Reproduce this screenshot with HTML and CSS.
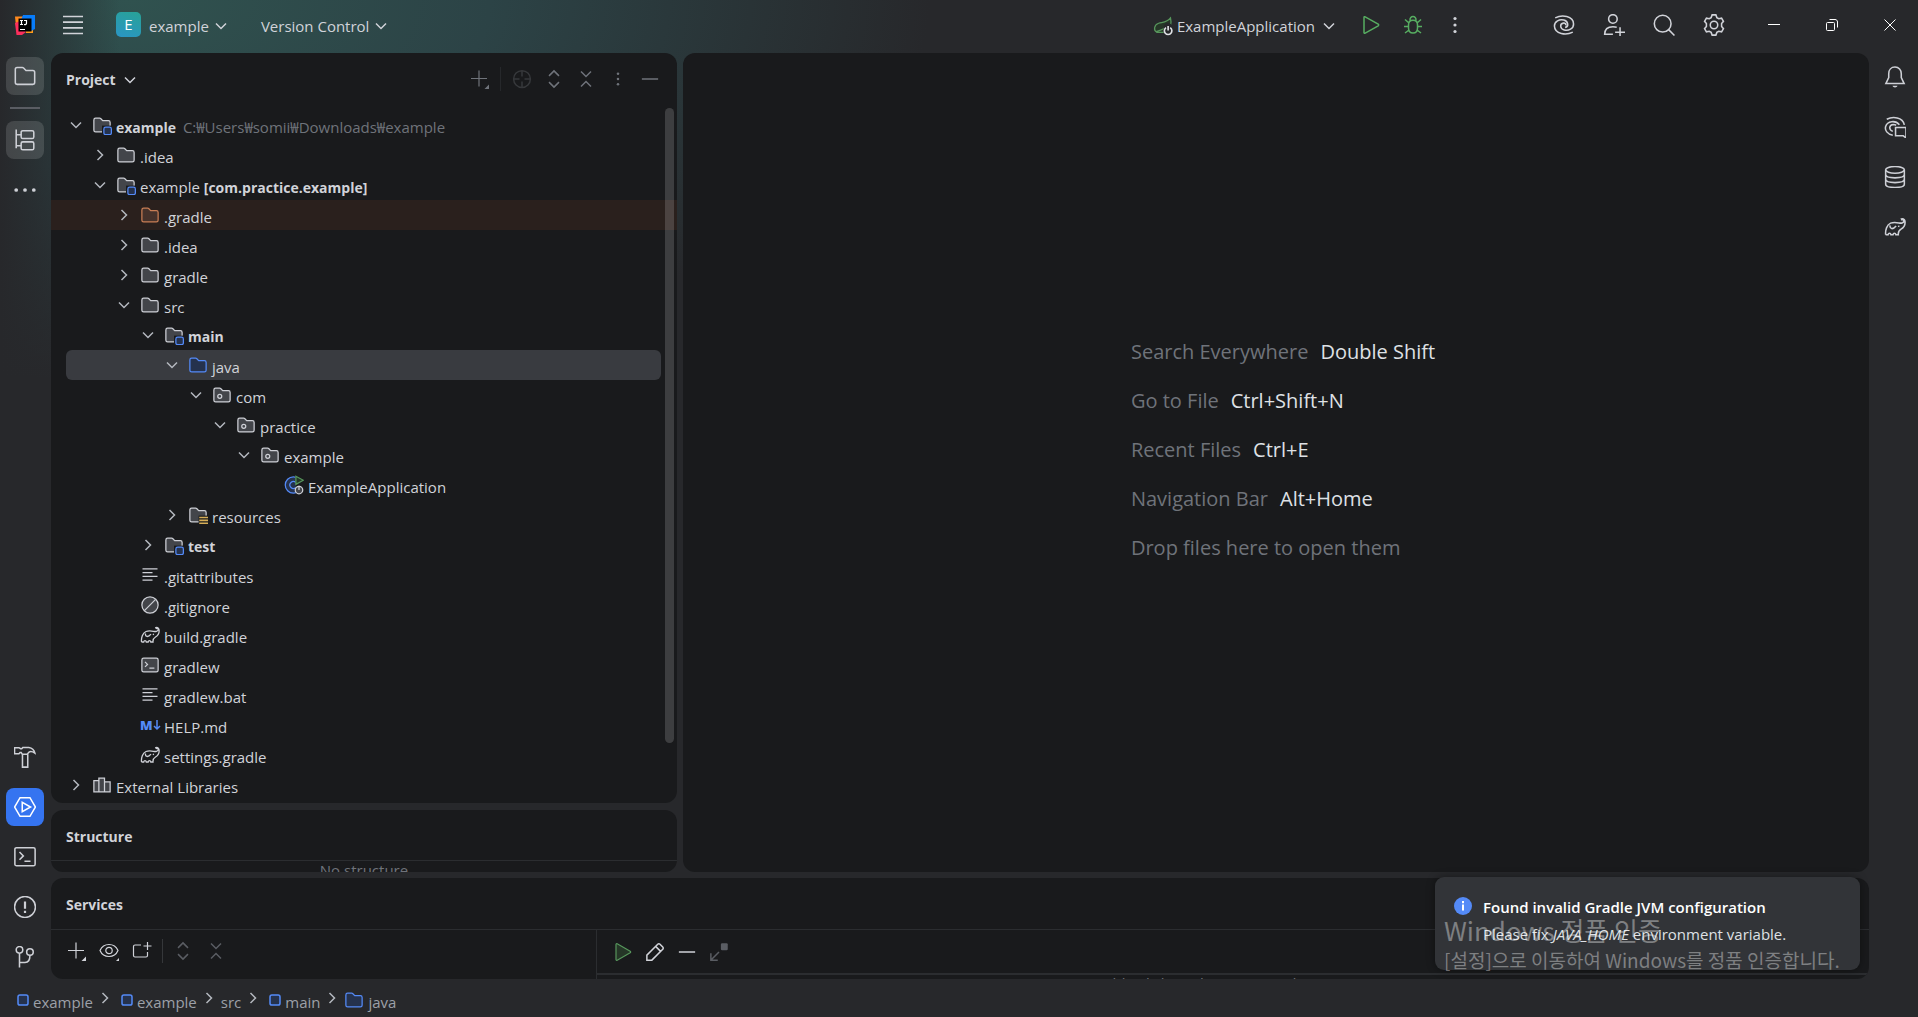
FILE: index.html
```html
<!DOCTYPE html>
<html lang="en">
<head>
  <meta charset="UTF-8" />
  <meta name="viewport" content="width=device-width, initial-scale=1.0"/>
  <title>example</title>
  <link rel="stylesheet" href="styles.css">
</head>
<body>
  <svg class="sprite" aria-hidden="true">
    <symbol id="down" viewBox="0 0 16 16"><path d="M4 6l4 4 4-4"/></symbol>
    <symbol id="right" viewBox="0 0 16 16"><path d="M6 4l4 4-4 4"/></symbol>
    <symbol id="folder" viewBox="0 0 16 16"><path d="M1.5 3.9c0-.8.6-1.4 1.4-1.4h3.2c.3 0 .6.1.8.3l1.7 1.7h4.5c.8 0 1.4.6 1.4 1.4v6.2c0 .8-.6 1.4-1.4 1.4H2.900c-.8 0-1.400-.6-1.400-1.400z"/></symbol>
    <symbol id="module" viewBox="0 0 16 16">
      <path d="M1.500 3.900c0-.8.6-1.400 1.400-1.400h3.200c.3 0 .6.1.8.3l1.700 1.700h4.500c.8 0 1.400.6 1.400 1.400v6.200c0 .8-.6 1.400-1.400 1.400H2.900c-.8 0-1.400-.6-1.400-1.400z"/>
      <rect class="cut" x="8" y="8.500" width="9" height="8"/>
      <rect class="blue" x="9.500" y="9.700" width="6" height="6" rx="1.400"/>
    </symbol>
    <symbol id="resources" viewBox="0 0 16 16">
      <path d="M1.500 3.900c0-.8.6-1.400 1.400-1.400h3.200c.3 0 .6.1.8.3l1.700 1.700h4.500c.8 0 1.400.6 1.400 1.400v6.200c0 .8-.6 1.400-1.400 1.400H2.900c-.8 0-1.400-.6-1.400-1.400z"/>
      <rect class="cut" x="8.500" y="8.500" width="8" height="8"/>
      <path class="gold" d="M9 10h7M9 12.300h7M9 14.600h7"/>
    </symbol>
    <symbol id="package" viewBox="0 0 16 16">
      <path d="M1.500 3.900c0-.8.6-1.400 1.400-1.400h3.200c.3 0 .6.1.8.3l1.700 1.700h4.500c.8 0 1.400.6 1.400 1.400v6.200c0 .8-.6 1.400-1.400 1.400H2.900c-.8 0-1.400-.6-1.400-1.400z"/>
      <circle cx="6.200" cy="9" r="1.600"/>
    </symbol>
    <symbol id="square" viewBox="0 0 16 16"><rect class="blue" x="4" y="4" width="8" height="8" rx="1.500"/></symbol>
    <symbol id="app" viewBox="0 0 16 16">
      <circle class="blue" cx="7.500" cy="8" r="6.500"/>
      <path class="blue-line" d="M9.500 6a2.800 2.800 0 1 0 0 4"/>
      <path class="cut" d="M9 0h7v16h-6.500V8z"/>
      <path class="green" d="M9.500 1v6.500L15.500 4.200z"/>
      <circle class="power" cx="12" cy="12" r="3"/><path d="M12 8.500v3.500"/>
    </symbol>
    <symbol id="spring" viewBox="0 0 16 16">
      <path class="green" d="M14 1.500c1 4 .4 9.500-4.500 11.500H3C.2 11.500.8 7 4.500 5.800c4-1 7-.8 9.500-4.300zM2.500 12.500c4-1 7-2 8.500-5"/>
      <path class="cut-bar" d="M8.500 9a3.500 3.500 0 0 1 7 0v7h-7z"/>
      <path class="bright" d="M10.400 9.300a3 3 0 1 0 3.400 0M12.100 8v3.500"/>
    </symbol>
    <symbol id="text" viewBox="0 0 16 16"><path d="M2 3h12M2 6h8M2 9h12M2 12h8"/></symbol>
    <symbol id="ignore" viewBox="0 0 16 16"><circle class="fill" cx="8" cy="8" r="6.500"/><path d="M3.500 12.500l9-9"/></symbol>
    <symbol id="gradle" viewBox="0 0 20 20">
      <path d="M1.500 17c-.4-4 1-9 4.500-10.500 2.500-1 5.500-.6 7.500-.2 2 .4 4.500.2 4.700-1.800.1-1.300-1.700-1.700-2.400-.6M1.500 17h2.200c.3-1.800 2.300-1.800 2.600 0h1.900c.3-1.800 2.300-1.800 2.600 0H13c-.2-2.500.8-4 2.500-5 2.500-1.500 4-4.500 3.500-7.500-.3-1.700-2.300-2.600-3.800-1.600M5.500 8.500c-.5 3.500 2.500 4.200 5.500.6M12.800 9.200l1.200.4"/>
    </symbol>
    <symbol id="shell" viewBox="0 0 16 16"><rect class="fill" x="1.500" y="2.500" width="13" height="11" rx="1.400"/><path d="M4 5.500l2 2-2 2M7.500 10.500h4"/></symbol>
    <symbol id="library" viewBox="0 0 16 16"><path d="M1.500 4.500h4v9h-4zM5.500 2.500h4.500v11H5.500zM10 5.500h4.500v8H10z"/></symbol>

    <symbol id="project" viewBox="0 0 20 20"><path d="M1.200 3.900c0-.9.700-1.600 1.600-1.600h4.800c.4 0 .8.200 1.100.5l2.200 2.200h6.300c.9 0 1.600.7 1.600 1.600v9.400c0 .9-.7 1.600-1.600 1.600H2.800c-.9 0-1.600-.7-1.600-1.600z"/></symbol>
    <symbol id="structure" viewBox="0 0 20 20"><path d="M2 .5v17M2 5.200h4.500M2 15.200h4.500"/><rect x="6.500" y="1.500" width="11.500" height="7.200" rx="1.500"/><rect x="6.500" y="11.700" width="11.500" height="7.200" rx="1.500"/></symbol>
    <symbol id="more" viewBox="0 0 20 20"><g class="dots"><circle cx="2" cy="10" r="1.700"/><circle cx="10" cy="10" r="1.700"/><circle cx="18" cy="10" r="1.700"/></g></symbol>
    <symbol id="kebab" viewBox="0 0 20 20"><g class="dots"><circle cx="10" cy="3.500" r="1.600"/><circle cx="10" cy="10" r="1.600"/><circle cx="10" cy="16.500" r="1.600"/></g></symbol>
    <symbol id="hammer" viewBox="0 0 20 20"><path d="M.5 1.500h4l1.500 1h1l1-1.200h5.500c2.800.4 4.700 2 5.500 5.200-1.800-1.200-3.800-2-5.300-1l-1.700 2H7.500L6.500 6h-1l-1 1h-4zM7.700 7.500v11.700h4.800V7.500"/></symbol>
    <symbol id="services" viewBox="0 0 20 20"><path d="M5.500 1.500h9L19.500 10l-5 8.500h-9L.5 10z"/><path d="M7.500 5.800v8.400l7.500-4.200z"/></symbol>
    <symbol id="terminal" viewBox="0 0 20 20"><rect x=".8" y="1.500" width="18.400" height="16.500" rx="1.500"/><path d="M5 5.500l3.500 3.500L5 12.500M9.500 13.800h5.500"/></symbol>
    <symbol id="problems" viewBox="0 0 20 20"><circle cx="10" cy="10" r="9.500"/><path class="thick" d="M10 5v6.500M10 13.500v2"/></symbol>
    <symbol id="git" viewBox="0 0 20 20"><circle cx="5" cy="3.500" r="3"/><circle cx="14.500" cy="5.500" r="3"/><path d="M5 6.500v13M5 15h5c3 0 4.500-2 4.500-6.500"/></symbol>
    <symbol id="bell" viewBox="0 0 20 20"><path d="M10 1c-3.500 0-5.700 2.500-5.700 6v3.500L1.700 16h16.600l-2.600-5.500V7c0-3.500-2.200-6-5.700-6z"/><path class="solid" d="M7.700 18h4.600c-.6 2-4 2-4.600 0z"/></symbol>
    <symbol id="swirl" viewBox="0 0 20 20"><path d="M2 3.500C8 .5 18.500 1.500 18.700 9c.1 4.500-4.700 6.500-8.500 5.500-4-1-4.300-5.800-.7-6.200 1.500-.2 2.500.8 2 2M18 16.500C12 19.500 1.500 18.500 1.300 11c-.1-4.500 4.700-6.500 8.500-5.500 4 1 5 5.800 1.200 6.700"/></symbol>
    <symbol id="chat" viewBox="0 0 20 20"><path d="M2.500 3C8 .2 17 1 18.500 8M8 17.500C3 16.500.5 13 1.500 9.500 3 4.500 10.500 3.500 14 8M8 14c-4-1.500-3.500-6 .5-6.300 1 0 2 .3 2.500.8M10.500 10.500h9.500v9.500l-2.500-2h-7z"/></symbol>
    <symbol id="database" viewBox="0 0 20 20"><ellipse cx="10" cy="3.500" rx="8.500" ry="3"/><path d="M1.500 3.500v13c0 4 17 4 17 0v-13M1.500 7.800c0 4 17 4 17 0M1.500 12.100c0 4 17 4 17 0"/></symbol>
    <symbol id="person" viewBox="0 0 20 20"><circle cx="9" cy="4.500" r="3.900"/><path d="M9 18.500H1.500c0-4.500 2.500-7 7.500-7 1.500 0 2.700.2 3.500.7M15.500 12v9M11 16.500h9"/></symbol>
    <symbol id="search" viewBox="0 0 20 20"><circle cx="8.800" cy="8.800" r="7.600"/><path d="M14.200 14.200l5.300 5.300"/></symbol>
    <symbol id="gear" viewBox="0 0 20 20"><circle cx="10" cy="10" r="3.400"/><path d="M8.300.8h3.400l.9 2.500 1.700 1 2.600-.5 1.700 2.900-1.700 2v2.600l1.700 2-1.700 2.900-2.600-.5-1.700 1-.9 2.500H8.300l-.9-2.500-1.700-1-2.600.5-1.700-2.900 1.700-2V8.700l-1.700-2 1.700-2.900 2.600.5 1.700-1z"/></symbol>
    <symbol id="menu" viewBox="0 0 20 20"><path d="M0 1.500h20M0 7.200h20M0 12.800h20M0 18.500h20"/></symbol>
    <symbol id="run" viewBox="0 0 20 20"><path d="M3 2.500v15c0 .7.600 1 1.200.7l13-7.400c.6-.4.600-1.200 0-1.600l-13-7.400C3.600 1.500 3 1.800 3 2.500z"/></symbol>
    <symbol id="bug" viewBox="0 0 20 20"><path d="M5.500 10c0-3 1.500-4.800 4.500-4.800s4.500 1.800 4.500 4.800v3c0 3-1.500 5-4.500 5s-4.500-2-4.500-5zM7 5.500C6.500 0 13.500 0 13 5.500M1 11.500h4.500M14.500 11.500H19M2 4.500l4 3.500M18 4.500L14 8M2 18l4-3M18 18l-4-3"/></symbol>
    <symbol id="minus" viewBox="0 0 16 16"><path d="M1.500 8h13"/></symbol>
    <symbol id="win-min" viewBox="0 0 12 12"><path d="M0 5.500h12"/></symbol>
    <symbol id="win-restore" viewBox="0 0 12 12"><rect x=".5" y="3.500" width="8" height="8" rx="1"/><path d="M3.500.5H9c1.500 0 2.500 1 2.500 2.500v5.500"/></symbol>
    <symbol id="win-close" viewBox="0 0 12 12"><path d="M.5.5l11 11M11.500.5l-11 11"/></symbol>
    <symbol id="add" viewBox="0 0 20 20"><path d="M2 9.500h16M10 1.500v16"/><path class="solid" d="M20 15.500V20h-4.500z"/></symbol>
    <symbol id="target" viewBox="0 0 16 16"><circle cx="8" cy="8" r="6.700"/><path d="M8 1.500V6M8 10v4.500M1.500 8H6M10 8h4.500"/></symbol>
    <symbol id="expand" viewBox="0 0 16 16"><path d="M4 5.500l4-4 4 4M4 10.500l4 4 4-4"/></symbol>
    <symbol id="collapse" viewBox="0 0 16 16"><path d="M4 2l4 4 4-4M4 14l4-4 4 4"/></symbol>
    <symbol id="eye" viewBox="0 0 20 20"><path d="M1 9.500C4.500 1.500 15.500 1.500 19 9.500c-3.500 8-14.500 8-18 0z"/><circle cx="10" cy="9.500" r="3.200"/><path class="solid" d="M21 16v5h-5z"/></symbol>
    <symbol id="new-tab" viewBox="0 0 20 20"><path d="M9 4H3C2 4 1.500 4.500 1.500 5.500v9c0 1 .5 1.500 1.500 1.500h11c1 0 1.500-.5 1.500-1.500V11M15.500 1v8M11.500 5h8"/></symbol>
    <symbol id="pencil" viewBox="0 0 16 16"><path d="M1.500 14.500v-4l8.700-8.700c.5-.5 1.300-.5 1.800 0l2.200 2.200c.5.500.5 1.300 0 1.800l-8.700 8.700zM8.500 3.500l4 4"/></symbol>
    <symbol id="move" viewBox="0 0 16 16"><rect class="solid" x="9.500" y="1" width="5.500" height="5.500" rx="1"/><path d="M8 8l-6 6M1.500 9v5.500H7"/></symbol>
  </svg>

  <div class="window">
    <header class="titlebar">
      <svg class="logo" viewBox="0 0 20 20">
        <path fill="#ff8a1e" d="M0 1.500h9L7 12 1.500 16z"/>
        <path fill="#fc2f5d" d="M0 8l5-2 6 11-4 3H1.500z"/>
        <path fill="#ff9c1a" d="M11 13h7v5h-7z"/>
        <path fill="#087cfa" d="M8 0h12v14l-4 2L6 5z"/>
        <path d="M3.500 3.500h13v13h-13z"/>
        <path stroke="#fff" stroke-width="1.200" fill="none" d="M5 5.500h3M6.500 5.500v4M5 9.500h3M9 5.500h2.500v3q0 1.200-2.500 1M5 14.500h5"/>
      </svg>
      <button class="plain" aria-label="Main menu"><svg class="ic menu"><use href="#menu"/></svg></button>
      <button class="drop project-drop"><span class="badge">E</span>example<svg class="ic"><use href="#down"/></svg></button>
      <button class="drop">Version Control<svg class="ic"><use href="#down"/></svg></button>
      <div class="run-tools">
        <button class="drop run-config"><svg class="ic"><use href="#spring"/></svg>ExampleApplication<svg class="ic"><use href="#down"/></svg></button>
        <button class="plain go" aria-label="Run"><svg class="ic"><use href="#run"/></svg></button>
        <button class="plain go" aria-label="Debug"><svg class="ic"><use href="#bug"/></svg></button>
        <button class="plain" aria-label="More"><svg class="ic"><use href="#kebab"/></svg></button>
      </div>
      <div class="main-tools">
        <button class="plain" aria-label="AI"><svg class="ic"><use href="#swirl"/></svg></button>
        <button class="plain" aria-label="Code with me"><svg class="ic"><use href="#person"/></svg></button>
        <button class="plain" aria-label="Search"><svg class="ic"><use href="#search"/></svg></button>
        <button class="plain" aria-label="Settings"><svg class="ic"><use href="#gear"/></svg></button>
      </div>
      <div class="win-tools">
        <button class="plain" aria-label="Minimize"><svg class="ic"><use href="#win-min"/></svg></button>
        <button class="plain" aria-label="Restore"><svg class="ic"><use href="#win-restore"/></svg></button>
        <button class="plain" aria-label="Close"><svg class="ic"><use href="#win-close"/></svg></button>
      </div>
    </header>

    <nav class="stripe left">
      <button class="tool on" aria-label="Project"><svg class="ic"><use href="#project"/></svg></button>
      <hr>
      <button class="tool on" aria-label="Structure"><svg class="ic"><use href="#structure"/></svg></button>
      <button class="tool" aria-label="More tool windows"><svg class="ic"><use href="#more"/></svg></button>
      <div class="spacer"></div>
      <button class="tool" aria-label="Build"><svg class="ic"><use href="#hammer"/></svg></button>
      <button class="tool active" aria-label="Services"><svg class="ic"><use href="#services"/></svg></button>
      <button class="tool" aria-label="Terminal"><svg class="ic"><use href="#terminal"/></svg></button>
      <button class="tool" aria-label="Problems"><svg class="ic"><use href="#problems"/></svg></button>
      <button class="tool" aria-label="Git"><svg class="ic"><use href="#git"/></svg></button>
    </nav>

    <main class="content">
      <div class="upper">
        <div class="side">
          <section class="panel project">
            <div class="panel-head">
              <button class="title">Project<svg class="ic"><use href="#down"/></svg></button>
              <div class="head-tools">
                <button class="plain" aria-label="New"><svg class="ic"><use href="#add"/></svg></button>
                <span class="sep"></span>
                <button class="plain faint" aria-label="Select opened file"><svg class="ic"><use href="#target"/></svg></button>
                <button class="plain" aria-label="Expand all"><svg class="ic"><use href="#expand"/></svg></button>
                <button class="plain" aria-label="Collapse all"><svg class="ic"><use href="#collapse"/></svg></button>
                <button class="plain" aria-label="Options"><svg class="ic small"><use href="#kebab"/></svg></button>
                <button class="plain" aria-label="Hide"><svg class="ic"><use href="#minus"/></svg></button>
              </div>
            </div>
            <ul class="tree">
              <li class="d0"><svg class="ic arrow"><use href="#down"/></svg><svg class="ic node"><use href="#module"/></svg><span><b>example</b> <span class="path">C:₩Users₩somii₩Downloads₩example</span></span></li>
              <li class="d1"><svg class="ic arrow"><use href="#right"/></svg><svg class="ic node"><use href="#folder"/></svg><span>.idea</span></li>
              <li class="d1"><svg class="ic arrow"><use href="#down"/></svg><svg class="ic node"><use href="#module"/></svg><span>example <b>[com.practice.example]</b></span></li>
              <li class="d2 excluded"><svg class="ic arrow"><use href="#right"/></svg><svg class="ic node"><use href="#folder"/></svg><span>.gradle</span></li>
              <li class="d2"><svg class="ic arrow"><use href="#right"/></svg><svg class="ic node"><use href="#folder"/></svg><span>.idea</span></li>
              <li class="d2"><svg class="ic arrow"><use href="#right"/></svg><svg class="ic node"><use href="#folder"/></svg><span>gradle</span></li>
              <li class="d2"><svg class="ic arrow"><use href="#down"/></svg><svg class="ic node"><use href="#folder"/></svg><span>src</span></li>
              <li class="d3"><svg class="ic arrow"><use href="#down"/></svg><svg class="ic node"><use href="#module"/></svg><b>main</b></li>
              <li class="d4 selected"><svg class="ic arrow"><use href="#down"/></svg><svg class="ic node source"><use href="#folder"/></svg><span>java</span></li>
              <li class="d5"><svg class="ic arrow"><use href="#down"/></svg><svg class="ic node"><use href="#package"/></svg><span>com</span></li>
              <li class="d6"><svg class="ic arrow"><use href="#down"/></svg><svg class="ic node"><use href="#package"/></svg><span>practice</span></li>
              <li class="d7"><svg class="ic arrow"><use href="#down"/></svg><svg class="ic node"><use href="#package"/></svg><span>example</span></li>
              <li class="d8 leaf"><svg class="ic line"><use href="#app"/></svg><span>ExampleApplication</span></li>
              <li class="d4"><svg class="ic arrow"><use href="#right"/></svg><svg class="ic node"><use href="#resources"/></svg><span>resources</span></li>
              <li class="d3"><svg class="ic arrow"><use href="#right"/></svg><svg class="ic node"><use href="#module"/></svg><b>test</b></li>
              <li class="d2 leaf"><svg class="ic line"><use href="#text"/></svg><span>.gitattributes</span></li>
              <li class="d2 leaf"><svg class="ic line"><use href="#ignore"/></svg><span>.gitignore</span></li>
              <li class="d2 leaf"><svg class="ic line elephant"><use href="#gradle"/></svg><span>build.gradle</span></li>
              <li class="d2 leaf"><svg class="ic line"><use href="#shell"/></svg><span>gradlew</span></li>
              <li class="d2 leaf"><svg class="ic line"><use href="#text"/></svg><span>gradlew.bat</span></li>
              <li class="d2 leaf"><span class="md">M<svg class="ic" viewBox="0 0 8 12"><path d="M4 1v9M1 7l3 3 3-3"/></svg></span><span>HELP.md</span></li>
              <li class="d2 leaf"><svg class="ic line elephant"><use href="#gradle"/></svg><span>settings.gradle</span></li>
              <li class="d0"><svg class="ic arrow"><use href="#right"/></svg><svg class="ic node"><use href="#library"/></svg><span>External Libraries</span></li>
            </ul>
            <div class="scrollbar"></div>
          </section>
          <section class="panel structure">
            <h2>Structure</h2>
            <p class="empty">No structure</p>
          </section>
        </div>
        <section class="panel editor">
          <dl class="hints">
            <div><dt>Search Everywhere</dt><dd>Double Shift</dd></div>
            <div><dt>Go to File</dt><dd>Ctrl+Shift+N</dd></div>
            <div><dt>Recent Files</dt><dd>Ctrl+E</dd></div>
            <div><dt>Navigation Bar</dt><dd>Alt+Home</dd></div>
            <div><dt>Drop files here to open them</dt></div>
          </dl>
        </section>
      </div>
      <section class="panel services">
        <h2>Services</h2>
        <div class="service-body">
          <div class="service-tree">
            <button class="plain" aria-label="Add service"><svg class="ic"><use href="#add"/></svg></button>
            <button class="plain" aria-label="View options"><svg class="ic"><use href="#eye"/></svg></button>
            <button class="plain" aria-label="Open in new tab"><svg class="ic"><use href="#new-tab"/></svg></button>
            <span class="sep"></span>
            <button class="plain dim" aria-label="Expand all"><svg class="ic"><use href="#expand"/></svg></button>
            <button class="plain dim" aria-label="Collapse all"><svg class="ic"><use href="#collapse"/></svg></button>
          </div>
          <div class="service-detail">
            <div class="detail-tools">
              <button class="plain go filled" aria-label="Run"><svg class="ic"><use href="#run"/></svg></button>
              <button class="plain" aria-label="Edit"><svg class="ic"><use href="#pencil"/></svg></button>
              <button class="plain" aria-label="Remove"><svg class="ic"><use href="#minus"/></svg></button>
              <button class="plain dim" aria-label="Move"><svg class="ic"><use href="#move"/></svg></button>
            </div>
            <p class="empty">Double-click on the server node to connect</p>
          </div>
        </div>
      </section>
    </main>

    <nav class="stripe right">
      <button class="tool" aria-label="Notifications"><svg class="ic"><use href="#bell"/></svg></button>
      <button class="tool" aria-label="AI chat"><svg class="ic"><use href="#chat"/></svg></button>
      <button class="tool" aria-label="Database"><svg class="ic"><use href="#database"/></svg></button>
      <button class="tool" aria-label="Gradle"><svg class="ic elephant"><use href="#gradle"/></svg></button>
    </nav>

    <footer class="crumbs">
      <a href="#"><svg class="ic mod"><use href="#square"/></svg>example</a>
      <svg class="ic arrow"><use href="#right"/></svg>
      <a href="#"><svg class="ic mod"><use href="#square"/></svg>example</a>
      <svg class="ic arrow"><use href="#right"/></svg>
      <a href="#">src</a>
      <svg class="ic arrow"><use href="#right"/></svg>
      <a href="#"><svg class="ic mod"><use href="#square"/></svg>main</a>
      <svg class="ic arrow"><use href="#right"/></svg>
      <a href="#"><svg class="ic node source"><use href="#folder"/></svg>java</a>
    </footer>

    <aside class="balloon">
      <svg class="info" viewBox="0 0 18 18"><circle cx="9" cy="9" r="9" fill="#548af7"/><path stroke="#fff" stroke-width="2" d="M9 4v2.200M9 7.500v6"/></svg>
      <div>
        <strong>Found invalid Gradle JVM configuration</strong>
        <p>Please fix <i>JAVA_HOME</i> environment variable.</p>
      </div>
    </aside>
    <div class="watermark">
      <div class="wm-title">Windows 정품 인증</div>
      <div>[설정]으로 이동하여 Windows를 정품 인증합니다.</div>
    </div>
  </div>
</body>
</html>
```
FILE: styles.css
```css
* {
  box-sizing: border-box;
}

body {
  margin: 0;
  background: #27282b;
  color: #d1d3d9;
  font: 15px/20px "Open Sans", "Noto Sans CJK KR", sans-serif;
  overflow: hidden;
}

h2, p, ul, dl, dd {
  margin: 0;
  padding: 0;
}

button {
  display: flex;
  align-items: center;
  margin: 0;
  padding: 0;
  border: none;
  background: none;
  color: inherit;
  font: inherit;
  white-space: nowrap;
}

.sprite {
  position: absolute;
  width: 0;
  height: 0;
}

.window {
  position: relative;
  display: grid;
  grid-template-columns: 51px 1fr 49px;
  grid-template-rows: 53px 1fr 38px;
  height: 100vh;
  background:
    linear-gradient(to right, #27282b, #27282b00 120px),
    radial-gradient(ellipse 800px 380px at 130px 0, #30524f, #2c4346 45%, #27282b);
}

/* icons */
.ic {
  flex: none;
  width: 20px;
  height: 20px;
  fill: none;
  stroke: currentColor;
  stroke-width: 1.2;
  overflow: visible;
}

.ic.arrow { color: #b4b8bf; }
.ic.small { width: 16px; height: 16px; }
.node { stroke: #ced0d6; fill: #43454a; stroke-width: 1; }
.line { stroke: #ced0d6; stroke-width: 1; }
.fill { fill: #43454a; }
.cut { fill: #191a1c; stroke: none; }
.cut-bar { fill: #27282b; stroke: none; }
.blue { fill: #25324d; stroke: #548af7; }
.blue-line { fill: none; stroke: #548af7; }
.gold { stroke: #d6ae58; stroke-width: 1.3; }
.green { fill: #253627; stroke: #57965c; stroke-width: 1; }
.power { fill: #43454a; stroke: #ced0d6; }
.bright { stroke: #dfe1e5; stroke-width: 1.3; }
.dots, .solid { fill: currentColor; stroke: none; }
.thick { stroke-width: 2; }
.source { fill: #25324d; stroke: #548af7; }
.go { color: #57ad61; }
.go.filled .ic { fill: #253627; color: #57965c; }
.dim { color: #5a5d63; }

/* title bar */
.titlebar {
  grid-column: 1 / -1;
  grid-row: 1;
  display: flex;
  align-items: center;
  padding: 0 22px 3px 15px;
}

.logo {
  width: 20px;
  height: 20px;
  margin-right: 28px;
}

.titlebar .menu {
  stroke-width: 1.7;
}

.titlebar .plain {
  flex: none;
}

.drop {
  gap: 2px;
  margin-left: 30px;
  padding-top: 2px;
}

.project-drop {
  margin-left: 33px;
}

.badge {
  width: 25px;
  height: 25px;
  margin: 0 6px 3px 0;
  border-radius: 5px;
  background: linear-gradient(200deg, #28a296, #2a95c5);
  color: #fff;
  line-height: 25px;
  text-align: center;
}

.run-tools {
  display: flex;
  align-items: center;
  gap: 22px;
  margin-left: auto;
}

.run-config {
  gap: 4px;
}

.run-tools .plain .ic {
  stroke-width: 1.5;
}

.main-tools {
  display: flex;
  gap: 28px;
  margin-left: 88px;
}

.main-tools .ic, .stripe .ic {
  width: 22px;
  height: 22px;
  stroke-width: 1.4;
}

.win-tools {
  display: flex;
  gap: 46px;
  margin-left: 43px;
  color: #fff;
}

.win-tools .ic {
  width: 12px;
  height: 12px;
  stroke-width: 1;
}

/* tool stripes */
.stripe {
  grid-row: 2 / 4;
  display: flex;
  flex-direction: column;
  align-items: center;
  gap: 12px;
  padding: 4px 1px 41px 0;
  color: #ced0d6;
}

.stripe.left {
  grid-column: 1;
}

.stripe.right {
  grid-column: 3;
  padding: 5px 0 0 3px;
}

.tool {
  justify-content: center;
  width: 38px;
  height: 38px;
  border-radius: 8px;
}

.tool.on { background: #ffffff22; }
.tool.active { background: #3574f0; color: #fff; }

.stripe hr {
  width: 30px;
  height: 2px;
  margin: 0;
  border: none;
  background: #5a5d63;
}

.spacer {
  flex: 1;
}

/* panels */
.content {
  grid-column: 2;
  grid-row: 2;
  display: flex;
  flex-direction: column;
  gap: 6px;
  min-width: 0;
  min-height: 0;
}

.upper {
  flex: 1;
  display: flex;
  gap: 6px;
  min-height: 0;
}

.side {
  flex: 0 0 626px;
  display: flex;
  flex-direction: column;
  gap: 7px;
}

.panel {
  position: relative;
  border-radius: 12px;
  background: #191a1c;
  overflow: hidden;
}

.project {
  flex: 1;
}

.panel-head {
  display: flex;
  align-items: center;
  justify-content: space-between;
  height: 57px;
  padding: 0 17px 4px 15px;
}

.title {
  gap: 4px;
  font-size: 14px;
  font-weight: bold;
}

.head-tools {
  display: flex;
  align-items: center;
  gap: 12px;
  padding-bottom: 2px;
  color: #6f737a;
}

.head-tools .faint {
  color: #36383b;
}

.head-tools .small {
  margin: 0 2px;
}

.sep {
  width: 1px;
  height: 24px;
  background: #35373a;
}

.head-tools .sep {
  margin: 0 -1px;
  background: #26282b;
}

.tree {
  list-style: none;
}

.tree li {
  display: flex;
  align-items: center;
  height: 30px;
  margin: 0 16px 0 15px;
  border-radius: 6px;
  white-space: pre;
}

.tree b {
  font-size: 14px;
}

.tree .arrow {
  margin-right: 6px;
}

.tree .node, .tree .line, .tree li > .md {
  margin-right: 4px;
}

.tree li > span, .tree li > b {
  padding-top: 4px;
}

.tree .elephant {
  stroke-width: 1.3;
}

.path {
  margin-left: 3px;
  color: #6f737a;
}

.tree .d0 { padding-left: 0; }
.tree .d1 { padding-left: 24px; }
.tree .d2 { padding-left: 48px; }
.tree .d3 { padding-left: 72px; }
.tree .d4 { padding-left: 96px; }
.tree .d5 { padding-left: 120px; }
.tree .d6 { padding-left: 144px; }
.tree .d7 { padding-left: 168px; }
.tree .d8 { padding-left: 192px; }

.leaf::before {
  content: "";
  width: 26px;
}

.tree .excluded {
  margin: 0;
  padding-left: 63px;
  border-radius: 0;
  background: #2a201d;
}

.excluded .node { fill: #45322b; stroke: #c77d55; }

.tree .selected {
  background: #393b40;
}

.tree li > .md {
  display: flex;
  align-items: center;
  width: 20px;
  padding: 0;
  color: #548af7;
  font-size: 13px;
  font-weight: 800;
}

.md .ic {
  width: 8px;
  height: 12px;
  stroke-width: 1.5;
}

.scrollbar {
  position: absolute;
  top: 55px;
  right: 3px;
  width: 9px;
  height: 635px;
  border-radius: 5px;
  background: #ffffff29;
}

.structure {
  flex: 0 0 62px;
}

.panel h2 {
  height: 51px;
  padding: 16px 15px 0;
  border-bottom: 1px solid #2b2d30;
  font-size: 14px;
  line-height: 22px;
}

.empty {
  color: #6f737a;
  text-align: center;
}

.structure .empty {
  line-height: 18px;
}

.editor {
  flex: 1;
  display: flex;
  align-items: center;
  justify-content: center;
  padding: 0 0 26px 14px;
}

.hints {
  color: #6f737a;
  font-size: 20px;
  line-height: 49px;
}

.hints div {
  display: flex;
  gap: 12px;
}

.hints dd {
  color: #dfe1e5;
}

/* services */
.services {
  display: flex;
  flex: 0 0 101px;
  flex-direction: column;
}

.services h2 {
  flex: none;
  height: 52px;
}

.service-body {
  flex: 1;
  display: flex;
  min-height: 0;
}

.service-tree {
  display: flex;
  align-items: center;
  gap: 13px;
  width: 546px;
  padding: 0 15px 8px;
  border-right: 1px solid #2b2d30;
}

.service-tree .sep {
  margin: 0 -3px;
}

.service-detail {
  flex: 1;
}

.detail-tools {
  display: flex;
  gap: 12px;
  height: 45px;
  padding: 11px 16px;
  border-bottom: 2px solid #2b2d30;
}

.service-detail .empty {
  line-height: 16px;
}

/* breadcrumbs */
.crumbs {
  grid-column: 1 / -1;
  grid-row: 3;
  display: flex;
  align-items: center;
  gap: 4px;
  padding: 0 13px;
  color: #9da0a8;
}

.crumbs a {
  display: flex;
  align-items: center;
  padding-top: 8px;
  color: inherit;
  text-decoration: none;
}

.crumbs .ic {
  margin-bottom: 4px;
}

.crumbs .node {
  margin-right: 4px;
}

.crumbs .arrow {
  margin: 0 -2px;
}

/* notification */
.balloon {
  position: absolute;
  right: 58px;
  bottom: 47px;
  display: flex;
  gap: 11px;
  width: 425px;
  height: 93px;
  padding: 20px 19px;
  border-radius: 9px;
  background: #323438;
  box-shadow: 0 0 8px #0006;
  color: #dfe1e5;
}

.balloon strong {
  display: block;
  margin-bottom: 7px;
  color: #fff;
  font-weight: 600;
}

.info {
  flex: none;
  width: 18px;
  height: 18px;
}

.watermark {
  position: absolute;
  right: 70px;
  bottom: 44px;
  width: 404px;
  color: #ffffff60;
  font-family: "Noto Sans CJK KR", sans-serif;
  font-size: 19px;
  line-height: 26px;
  white-space: nowrap;
  pointer-events: none;
}

.wm-title {
  font-size: 26px;
  line-height: 34px;
}
```
